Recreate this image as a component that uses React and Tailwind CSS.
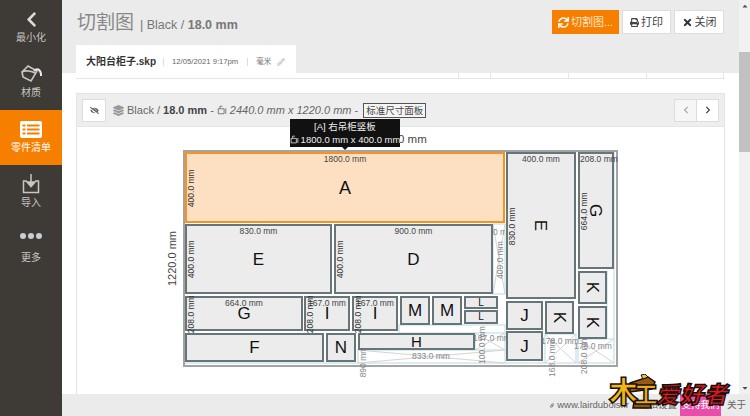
import React from "react";
import { FaChevronLeft, FaSync, FaPrint, FaTimes, FaEyeSlash, FaLayerGroup, FaPencilAlt, FaChevronRight, FaLink, FaCaretUp, FaCaretDown } from "react-icons/fa";

const pieces = [
  { x: 2, y: 2, w: 320, h: 71, name: "A", top: "1800.0 mm", left: "400.0 mm", active: true, size: 18 },
  { x: 2, y: 74, w: 147, h: 70, name: "E", top: "830.0 mm", left: "400.0 mm", size: 17 },
  { x: 151, y: 74, w: 159, h: 70, name: "D", top: "900.0 mm", left: "400.0 mm", size: 17 },
  { x: 323, y: 2, w: 70, h: 147, name: "E", top: "400.0 mm", left: "830.0 mm", rotate: true, size: 17 },
  { x: 395, y: 2, w: 36, h: 117, name: "G", top: "208.0 mm", left: "664.0 mm", rotate: true, size: 17 },
  { x: 2, y: 146, w: 118, h: 35, name: "G", top: "664.0 mm", left: "208.0 mm", size: 17 },
  { x: 121, y: 146, w: 46, h: 35, name: "I", top: "167.0 mm", left: "208.0 mm", size: 17 },
  { x: 169, y: 146, w: 46, h: 35, name: "I", top: "167.0 mm", left: "208.0 mm", size: 17 },
  { x: 217, y: 146, w: 30, h: 29, name: "M", size: 17 },
  { x: 249, y: 146, w: 30, h: 29, name: "M", size: 17 },
  { x: 281, y: 146, w: 34, h: 13, name: "L", size: 10 },
  { x: 281, y: 160, w: 34, h: 14, name: "L", size: 10 },
  { x: 175, y: 183, w: 117, h: 17, name: "H", size: 15 },
  { x: 2, y: 183, w: 139, h: 29, name: "F", size: 17 },
  { x: 143, y: 183, w: 30, h: 29, name: "N", size: 17 },
  { x: 323, y: 151, w: 37, h: 29, name: "J", size: 17 },
  { x: 323, y: 181, w: 37, h: 30, name: "J", size: 17 },
  { x: 362, y: 151, w: 29, h: 33, name: "K", rotate: true, size: 17 },
  { x: 395, y: 121, w: 29, h: 33, name: "K", rotate: true, size: 17 },
  { x: 395, y: 156, w: 29, h: 33, name: "K", rotate: true, size: 17 },
];

const wasteLabels = [
  { x: 310, y: 76, text: "0 mm", w: 12 },
  { x: 286, y: 182, text: "167.0 mm", w: 46 },
  { x: 218, y: 200, text: "833.0 mm", w: 60 },
  { x: 354, y: 185, text: "178.0 mm", w: 46 },
  { x: 387, y: 190, text: "178.0 mm", w: 46 },
];

const wasteSide = [
  { x: 317, y: 110, text: "409.0 mm" },
  { x: 299, y: 195, text: "100.0 mm" },
  { x: 369, y: 208, text: "168.0 mm" },
  { x: 401, y: 205, text: "208.0 mm" },
  { x: 180, y: 212, text: "890 mm" },
];

const tabCells = ["w-[163px]", "w-[32px]", "w-[78px]", "w-[78px]", "w-[77px]"];

function DimIcon({ className }) {
  return (
    <svg viewBox="0 0 12 12" className={className} fill="none" stroke="currentColor" strokeWidth="1">
      <path d="M1.5 4.5h7v6h-7zM3.5 4.5v-3h3M10.5 4v6.5" />
    </svg>
  );
}

function Piece({ piece }) {
  const { x, y, w, h, name, top, left, active, rotate, size } = piece;
  return (
    <div
      className={`absolute flex items-center justify-center overflow-visible border-2 ${active ? "border-[#f7931e] bg-[#fde0c2]" : "border-[#66757a] bg-[#ececec]"}`}
      style={{ left: x, top: y, width: w, height: h }}
    >
      {top && (
        <span className="absolute -top-px left-0 right-0 whitespace-nowrap text-center text-[8.5px] leading-[13px] text-[#444]">{top}</span>
      )}
      {left && (
        <span className="absolute top-1/2 left-[3px] w-0 whitespace-nowrap text-[8.5px] leading-none text-[#333]">
          <span className="block w-[40px] -translate-x-[19px] -translate-y-[4px] -rotate-90 text-center">{left}</span>
        </span>
      )}
      <span className={`leading-none text-[#111] ${rotate ? "rotate-90" : ""}`} style={{ fontSize: size }}>{name}</span>
    </div>
  );
}

function Sheet() {
  return (
    <div className="absolute left-[106px] top-[23px] h-[217px] w-[435px] border-2 border-[#a3a3a3] bg-white">
      <svg className="absolute -left-[2px] -top-[2px] h-[217px] w-[435px]" viewBox="0 0 435 217" fill="none">
        <g stroke="#cfe6ee" strokeWidth="1.5">
          <path d="M2 213h429M431 2v211M310 74h12v70h-12zM175 200h147v13H175zM292 183h30v17h-30zM362 184h31v29h-31zM395 189h36v24h-36zM216 175h106v8H216zM424 121v68" />
        </g>
        <g stroke="#d4d4d4" strokeWidth="1">
          <path d="M310 74l12 70M322 74l-12 70M175 200l147 13M322 200l-147 13M292 183l30 17M322 183l-30 17M362 184l31 29M393 184l-31 29M395 189l36 24M431 189l-36 24" />
        </g>
      </svg>
      <div className="absolute -left-[2px] -top-[2px]">
        {wasteLabels.map((label, i) => (
          <span
            key={i}
            className="absolute overflow-hidden whitespace-nowrap text-center text-[8.5px] leading-[13px] text-[#888]"
            style={{ left: label.x, top: label.y, width: label.w }}
          >
            {label.text}
          </span>
        ))}
        {wasteSide.map((label, i) => (
          <span
            key={i}
            className="absolute block w-[40px] -translate-x-1/2 -translate-y-1/2 -rotate-90 whitespace-nowrap text-center text-[8.5px] leading-none text-[#888]"
            style={{ left: label.x, top: label.y }}
          >
            {label.text}
          </span>
        ))}
        {pieces.map((piece, i) => (
          <Piece key={i} piece={piece} />
        ))}
      </div>
    </div>
  );
}

function SideItem({ label, icon, active }) {
  return (
    <div className={`flex h-[55px] flex-col items-center ${active ? "bg-[#f77f00] text-white" : "text-[#c8c6c3]"}`}>
      <div className="flex h-[32px] items-center justify-center pt-[6px]">{icon}</div>
      <span className="text-[10px] leading-[12px]">{label}</span>
    </div>
  );
}

function Logo() {
  return (
    <div className="absolute left-[608px] top-[374px] h-[38px] w-[124px]">
      <svg viewBox="0 0 50 38" className="absolute left-0 top-0 h-[38px] w-[50px]">
        <path d="M22 9l18-6 7 5-3 7-22 3z" fill="#9a5a12" stroke="#1a1005" strokeWidth="1.5" />
        <path d="M33 1l4-1 3 3-5 2z" fill="#f0c23c" stroke="#1a1005" />
        <path d="M26 28h16l1 6H25z" fill="#8f5612" stroke="#1a1005" strokeWidth="1.5" />
      </svg>
      <span className="absolute left-[1px] top-[5px] text-[29px] font-black leading-none text-[#f2b51d] [-webkit-text-stroke:1.5px_#1a1005]">木</span>
      <span className="absolute left-[26px] top-[9px] text-[24px] font-black leading-none text-[#e8ab1a] [-webkit-text-stroke:1.5px_#1a1005]">工</span>
      <span className="absolute left-[48px] top-[10px] whitespace-nowrap text-[23px] font-black italic leading-none tracking-[1px] text-[#e8161a] [-webkit-text-stroke:1.5px_#12100e]">爱好者</span>
    </div>
  );
}

export default function App() {
  return (
    <div className="relative flex h-[416px] w-[750px] overflow-hidden bg-white font-['Liberation_Sans','Noto_Sans_CJK_SC',sans-serif] text-[#555]">
      {/* Sidebar */}
      <div className="w-[62px] shrink-0 bg-[#3e3b36]">
        <SideItem label="最小化" icon={<FaChevronLeft className="h-[17px] w-[17px] text-[#dcdcdc]" />} />
        <SideItem
          label="材质"
          icon={
            <svg viewBox="0 0 24 22" className="h-[22px] w-[24px]" fill="none" stroke="currentColor" strokeWidth="1.6">
              <path d="M3 9l6-6 9 5-6 10-8-4z" />
              <path d="M3 9c3-2 10-1 13 1" />
              <path d="M15 8c3-3 6-2 7 3v2" stroke="#e9e9e9" strokeWidth="2" />
            </svg>
          }
        />
        <SideItem
          active
          label="零件清单"
          icon={
            <svg viewBox="0 0 22 17" className="h-[17px] w-[22px]">
              <rect width="22" height="17" rx="2" fill="#fff" />
              <path d="M2.5 4.5h3M7 4.5h12.5M2.5 8.5h3M7 8.5h12.5M2.5 12.5h3M7 12.5h12.5" stroke="#f77f00" strokeWidth="2" />
            </svg>
          }
        />
        <SideItem
          label="导入"
          icon={
            <svg viewBox="0 0 18 20" className="h-[20px] w-[18px]" fill="none" stroke="currentColor" strokeWidth="1.5">
              <path d="M5 7H1.5v11.5h15V7H13" />
              <path d="M9 0v11" />
              <path d="M5 8l4 4.5L13 8z" fill="currentColor" />
            </svg>
          }
        />
        <div className="flex h-[55px] flex-col items-center pt-[13px] text-[#c8c6c3]">
          <svg viewBox="0 0 22 6" className="h-[6px] w-[22px]" fill="#c9ced6">
            <circle cx="3" cy="3" r="3" />
            <circle cx="11" cy="3" r="3" />
            <circle cx="19" cy="3" r="3" />
          </svg>
          <span className="mt-[13px] text-[10px] leading-[12px]">更多</span>
        </div>
      </div>

      {/* Main */}
      <div className="flex min-w-0 flex-1 flex-col">
        <div className="flex min-h-0 flex-1">
          <div className="flex min-w-0 flex-1 flex-col">
            <div className="h-[73px] shrink-0 bg-[#ebebeb]">
              <div className="flex h-[45px] items-start justify-between pl-[15px] pr-[15px] pt-[10px]">
                <div className="flex items-baseline pt-[1px]">
                  <span className="text-[19px] leading-[24px] text-[#888]">切割图</span>
                  <span className="ml-[6px] text-[12.5px] text-[#777]">| Black / <b className="font-bold">18.0 mm</b></span>
                </div>
                <div className="flex gap-[3px]">
                  <button className="flex h-[24px] w-[67px] items-center justify-center gap-[2px] bg-[#f77f00] text-[11px] text-[#ffe6cc]">
                    <FaSync className="h-[11px] w-[11px] text-white" />切割图...
                  </button>
                  <button className="flex h-[24px] w-[49px] items-center justify-center gap-[2px] border border-[#ddd] bg-white text-[11px] text-[#444]">
                    <FaPrint className="h-[9px] w-[9px]" />打印
                  </button>
                  <button className="flex h-[24px] w-[50px] items-center justify-center gap-[2px] border border-[#ddd] bg-white text-[11px] text-[#444]">
                    <FaTimes className="h-[11px] w-[11px] text-[#333]" />关闭
                  </button>
                </div>
              </div>
            </div>

            <div className="-mt-[28px] mx-[14px] flex h-[34px] shrink-0 border-b border-[#e5e5e5]">
              <div className="flex w-[220px] items-center bg-white pl-[10px] text-[#333]">
                <span className="text-[10px] font-bold">大阳台柜子.skp</span>
                <span className="ml-[7px] border-l border-[#ddd] pl-[8px] text-[7.7px] leading-[8px] text-[#666]">12/05/2021 9:17pm</span>
                <span className="ml-[9px] border-l border-[#ddd] pl-[8px] text-[7.5px] leading-[8px] text-[#777]">毫米</span>
                <FaPencilAlt className="ml-[6px] h-[8px] w-[8px] text-[#ccc]" />
              </div>
              <div className="flex flex-1 items-end">
                {tabCells.map((c, i) => (
                  <div key={i} className={`h-[6px] border-r border-[#e5e5e5] ${c}`} />
                ))}
              </div>
            </div>

            <div className="mx-[14px] mt-[14px] flex min-h-0 flex-1 flex-col border border-b-0 border-[#e5e5e5]">
              <div className="flex h-[33px] shrink-0 items-center border-b border-[#e5e5e5] bg-[#eeeeee] pl-[5px] pr-[5px]">
                <div className="flex h-[23px] w-[24px] items-center justify-center border border-[#ddd] bg-white">
                  <FaEyeSlash className="h-[9px] w-[9px] text-[#555]" />
                </div>
                <FaLayerGroup className="ml-[7px] h-[11px] w-[11px] text-[#999]" />
                <span className="ml-[3px] whitespace-nowrap text-[11px] text-[#666]">
                  Black / <b className="text-[#444]">18.0 mm</b> - 
                </span>
                <DimIcon className="ml-[3px] h-[10px] w-[10px] text-[#666]" />
                <span className="ml-[3px] whitespace-nowrap text-[11px] italic text-[#666]">2440.0 mm x 1220.0 mm</span>
                <span className="ml-[3px] text-[11px] text-[#666]">-</span>
                <span className="ml-[5px] whitespace-nowrap border border-[#555] bg-[#f5f5f5] px-[2px] text-[9.5px] leading-[13px] text-[#444]">标准尺寸面板</span>
                <div className="ml-auto flex">
                  <div className="flex h-[23px] w-[23px] items-center justify-center border border-[#ddd] bg-[#f6f6f6]">
                    <FaChevronLeft className="h-[8px] w-[8px] text-[#aaa]" />
                  </div>
                  <div className="-ml-px flex h-[23px] w-[23px] items-center justify-center border border-[#ddd] bg-white">
                    <FaChevronRight className="h-[8px] w-[8px] text-[#345]" />
                  </div>
                </div>
              </div>

              <div className="relative min-h-0 flex-1 bg-white">
                <span className="absolute left-[261px] top-[4px] w-[120px] text-center text-[11.5px] text-[#444]">2440.0 mm</span>
                <span className="absolute left-[55px] top-[126px] w-[80px] -rotate-90 text-center text-[11px] leading-none text-[#444]">1220.0 mm</span>
                <Sheet />
                {/* tooltip */}
                <div className="absolute left-[213px] top-[-8px] flex h-[28px] w-[110px] flex-col items-center justify-center bg-[#111] text-[9.5px] leading-[13px] text-[#eee]">
                  <span>[A] 右吊柜竖板</span>
                  <span className="flex items-center gap-[2px] whitespace-nowrap"><DimIcon className="h-[9px] w-[9px]" />1800.0 mm x 400.0 mm</span>
                  <div className="absolute -bottom-[3px] left-1/2 h-0 w-0 -translate-x-1/2 border-x-[4px] border-t-[4px] border-x-transparent border-t-[#111]" />
                </div>
              </div>
            </div>
          </div>

          {/* Scrollbar */}
          <div className="relative w-[11px] shrink-0 bg-[#f1f1f1]">
            <FaCaretUp className="absolute left-[2px] top-[2px] h-[8px] w-[8px] text-[#505050]" />
            <div className="absolute left-0 right-0 top-[52px] h-[100px] bg-[#c1c1c1]" />
            <FaCaretDown className="absolute bottom-[2px] left-[2px] h-[8px] w-[8px] text-[#505050]" />
          </div>
        </div>

        {/* Footer */}
        <div className="flex h-[22px] shrink-0 items-center bg-[#ebebeb] pl-[488px] text-[9.5px] text-[#666]">
          <div className="flex w-[79px] shrink-0 items-center gap-[3px] whitespace-nowrap">
            <FaLink className="h-[7px] w-[7px]" />www.lairdubois.fr
          </div>
          <span className="ml-[10px] w-[38px] shrink-0 whitespace-nowrap">隐私设置</span>
          <div className="ml-[3px] flex h-[22px] w-[41px] shrink-0 items-center justify-center bg-[#e84fa8] text-white">支持我们</div>
          <span className="ml-[6px] whitespace-nowrap">关于</span>
        </div>
      </div>

      <Logo />
    </div>
  );
}
